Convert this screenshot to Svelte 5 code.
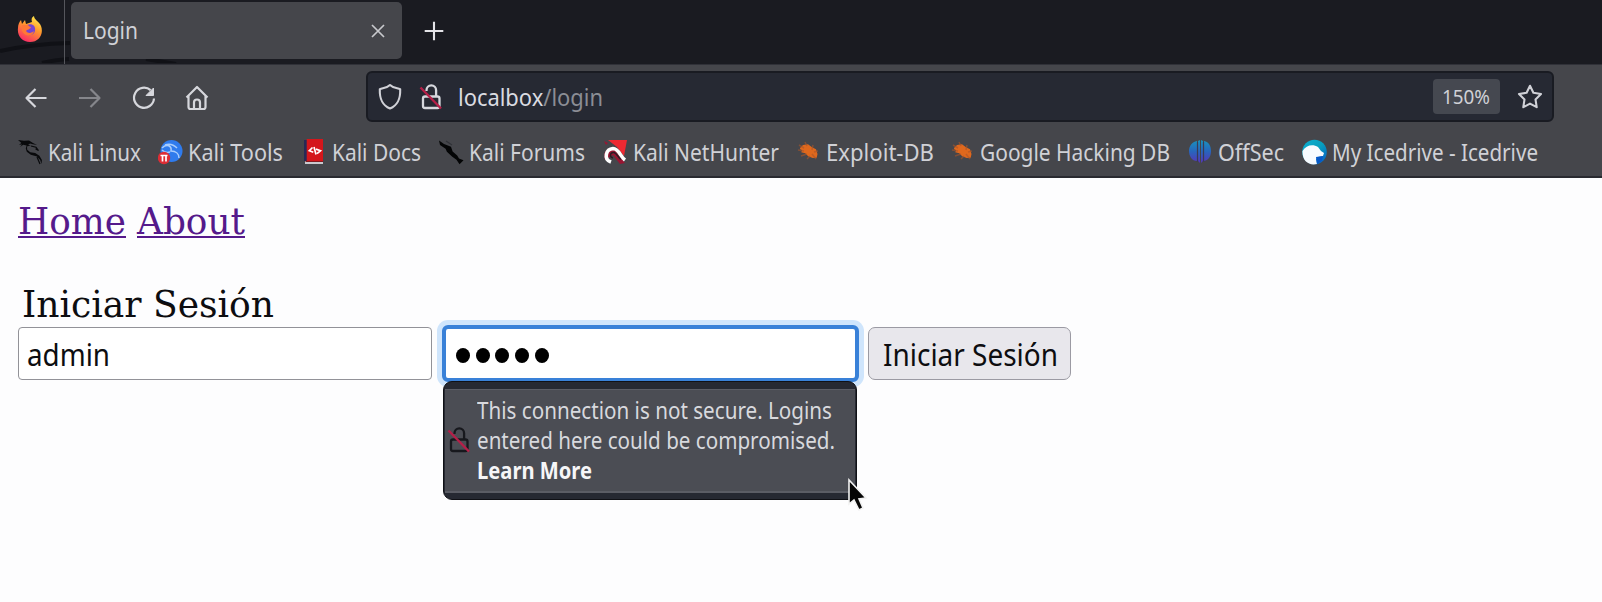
<script>
  const bookmarks = [
    { icon: 'dragon', text: 'Kali Linux', slot: 140, width: 93 },
    { icon: 'tools', text: 'Kali Tools', slot: 144, width: 95 },
    { icon: 'docs', text: 'Kali Docs', slot: 137, width: 89 },
    { icon: 'forums', text: 'Kali Forums', slot: 164, width: 116 },
    { icon: 'nethunter', text: 'Kali NetHunter', slot: 193, width: 146 },
    { icon: 'bug', text: 'Exploit-DB', slot: 154, width: 108 },
    { icon: 'bug', text: 'Google Hacking DB', slot: 238, width: 190 },
    { icon: 'offsec', text: 'OffSec', slot: 114, width: 66 },
    { icon: 'icedrive', text: 'My Icedrive - Icedrive', slot: 240, width: 206 }
  ];

  // Condenses a label horizontally so that it occupies the given width.
  function fit(node, width) {
    const natural = node.getBoundingClientRect().width;
    node.style.transform = `scaleX(${width / natural})`;
    node.style.marginRight = `${width - natural}px`;
  }
</script>

{#snippet lock(color)}
  <svg class="lock" width="24" height="28" viewBox="0 0 24 28" fill="none">
    <rect x="4" y="13.5" width="16.5" height="11.5" rx="2" stroke={color} stroke-width="2.3" />
    <path d="M7.5 8V7.2a4.8 4.8 0 0 1 9.6 0V13" stroke={color} stroke-width="2.3" />
    <path d="M1.5 4.5 22 25.5" stroke="#b51f48" stroke-width="2.4" />
  </svg>
{/snippet}

{#snippet glyph(name)}
  <svg class="glyph" width="25" height="26" viewBox="0 0 25 26" fill="none">
    {#if name === 'dragon'}
      <path d="M0 1l6 .8 5-.3 4 2.5 4 2-4-.8-3-.6-2 1.500 3 .2-4 1.200.2 3.200 3 2.600 5 .8 4.200 2.600 2.500 4.200-.4 4-1.300-4-3.200-3.300-6.200-1.800-4-3-1-3.300.8-3-3.400-.7L2 8l2-2.500-3 .2 2.400-1.600z" fill="#08090b" />
      <path d="M13 7l5 1.200 2.500 3.300-3-1.800M19 18l3 7" stroke="#08090b" stroke-width="1.2" />
    {:else if name === 'tools'}
      <circle cx="13.500" cy="12" r="11" fill="#2f7bed" />
      <path d="M4 9c5-5 10-2 9 3 5 0 8 3 8 7M7 6c5-2 9 0 12 3M12 13c-3 1-6 0-8-2" stroke="#a9cdfc" stroke-width="1.5" />
      <circle cx="6" cy="19" r="6.200" fill="#dd2d35" />
      <path d="M2.500 16.500h7M4.500 16.500v6M8 16.500v6" stroke="#fff" stroke-width="1.700" />
    {:else if name === 'docs'}
      <path d="M2 1h3v21H2z" fill="#272956" />
      <path d="M4.700 0H21v22H4.700z" fill="#d4161b" />
      <path d="M3 22h18v3H3z" fill="#c9c9ce" />
      <path d="M3.500 22H21v1H3.500z" fill="#831a20" />
      <path d="m10.500 8.500-3.200 3.200 4 1.500M15 14.700l3.500-3-4.500-1.600M12 8l2 7.500" stroke="#fff" stroke-width="1.700" />
    {:else if name === 'forums'}
      <path d="M0 1.500 5 5l7 2.800 1.600 4.600 4.600 4 1.800 3 4.500 1.800-4 4-3-4.500-4.200-3-5.400-5-1.300-3L1 6z" fill="#030405" />
      <path d="M7 2l6 4" stroke="#303238" stroke-width="1.2" />
    {:else if name === 'nethunter'}
      <path d="M5 1h19l-3 16-7-9z" fill="#ed2932" />
      <path d="M3 6 1 2l4 2M2 21c-3-8 3-14 9-11l11 14-5 1-7-9" fill="#981532" />
      <path d="M8 23c-8-3-5-13 2-13.500 6 0 7 8 12 11.500" stroke="#fff" stroke-width="3.600" />
      <path d="M10 19c-4-1-3-6 1-5.500 3 1 4 5 7 7" stroke="#2b1c26" stroke-width="1.400" />
    {:else if name === 'bug'}
      <path d="M4 9l3-3 5-.8 4 3 4 2 1.500 4.800-.8 3.700-4 .2-4.500-1.700-3-3-4-1 1-2-2-1z" fill="#df681d" />
      <path d="m3 6 5 3M9 3l2 4M2 11l6 1M5 17l6-2M11 20l3-3M17 6l-1 5M22 12l-4 1M20 20l-4-5" stroke="#a9552a" stroke-width="1.500" opacity=".6" />
    {:else if name === 'offsec'}
      <defs>
        <linearGradient id="offsec" x1="0" y1="0" x2="0" y2="1">
          <stop stop-color="#1893bd" /><stop offset=".5" stop-color="#2865bd" /><stop offset="1" stop-color="#5734b8" />
        </linearGradient>
      </defs>
      <path d="M9 2v20C4 22 1 17 1 12S4 3 9 2zm3-1v23l-2-2V2zm3 1v20l-2 2V1zm1 0c5 1 7 5 7 10s-2 9-7 10z" fill="url(#offsec)" />
      <path d="M9.500 3v20M15.500 3v20" stroke="#393b55" stroke-width="1.200" />
    {:else}
      <defs>
        <linearGradient id="ice" x1="0" y1="0" x2="1" y2="1">
          <stop stop-color="#0caed0" /><stop offset=".5" stop-color="#079fbe" /><stop offset="1" stop-color="#0757c5" />
        </linearGradient>
      </defs>
      <circle cx="12.500" cy="13" r="12.300" fill="url(#ice)" />
      <path d="M.5 12C4 6 11 5 16 8l3 4 3 2-1 3-5 1-2 2 1 5C7 27 0 22 .5 12z" fill="#f7fbff" />
      <path d="m14 18 7-1-1 5-5 3z" fill="#0758c8" />
    {/if}
  </svg>
{/snippet}

<div class="window">
  <header>
    <div class="tabs">
      <svg class="streaks" width="240" height="63" viewBox="0 0 240 63" fill="none">
        <path d="M0 51Q32 44 70 43M42 63Q54 60 69 59M146 59l30 5" stroke="#101116" stroke-width="4" />
      </svg>
      <div class="brand">
        <svg width="26" height="28" viewBox="0 0 26 28">
          <defs>
            <linearGradient id="flame" x1=".8" y1="0" x2=".3" y2="1">
              <stop stop-color="#fff04d" /><stop offset=".45" stop-color="#ff972d" /><stop offset="1" stop-color="#fa2868" />
            </linearGradient>
          </defs>
          <path d="M4 4l1 4 3-4 1 4 6-2c-1-3 0-5 2-6 0 4 5 5 7 10 3 8-2 16-11 16C5 26 0 20 1 12c0-3 1-6 3-8z" fill="url(#flame)" />
          <path d="M10 9c5-2 9 1 8 6-1 4-6 6-10 2-2-2-1-4 1-4l3-1z" fill="#7544d2" />
          <path d="M5 9l5 0c2 0 2 2 4 2-1 3-4 2-5 4 2 3 6 2 8 0-1 6-9 6-12 0z" fill="#ff7836" />
        </svg>
      </div>
      <div class="tab">
        <span class="text" use:fit={55}>Login</span>
        <svg width="14" height="14" viewBox="0 0 14 14"><path d="M1 1l12 12M13 1 1 13" stroke="#c8c9cd" stroke-width="1.700" /></svg>
      </div>
      <svg class="plus" width="20" height="20" viewBox="0 0 20 20"><path d="M10 .7v18.600M.7 10h18.600" stroke="#e4e4e8" stroke-width="2.100" /></svg>
    </div>

    <div class="toolbar">
      <div class="nav">
        <svg width="26" height="26" viewBox="0 0 26 26"><path d="M23.500 13H3M12.500 4 3.500 13l9 9" /></svg>
        <svg class="off" width="26" height="26" viewBox="0 0 26 26"><path d="M2 13h20.500M13.500 4l9 9-9 9" /></svg>
        <svg width="26" height="26" viewBox="0 0 26 26"><path d="M19.600 5.200A10 10 0 1 0 23 13.500" /><path d="M22.500 3v7.500H15z" class="solid" /></svg>
        <svg class="home" width="26" height="26" viewBox="0 0 26 26"><path d="M2.500 12.500 13 2l10.500 10.500M4.500 11v11q0 2 2 2h13q2 0 2-2V11M10 24v-6.500a3 3 0 0 1 6 0V24" /></svg>
      </div>
      <div class="address">
        <svg class="line" width="26" height="28" viewBox="0 0 26 28"><path d="M13 2C10 5 6 5 2.800 6.200 2.500 16 5 22 13 25.500 21 22 23.500 16 23.200 6.200 20 5 16 5 13 2z" /></svg>
        {@render lock('#d6d7dd')}
        <div class="url"><span class="text" use:fit={145}>localbox<i>/login</i></span></div>
        <div class="zoom"><span class="text" use:fit={48}>150%</span></div>
        <svg class="line" width="26" height="26" viewBox="0 0 26 26"><path d="m13 1.800 3.400 7 7.600 1.200-5.500 5.400 1.200 7.800-6.700-3.600-6.700 3.600 1.200-7.800L2 10l7.600-1.200z" /></svg>
      </div>
    </div>

    <nav class="bookmarks">
      {#each bookmarks as b}
        <div class="bookmark" style="width: {b.slot}px">
          {@render glyph(b.icon)}
          <span class="text" use:fit={b.width}>{b.text}</span>
        </div>
      {/each}
    </nav>
  </header>

  <main>
    <div class="links">
      <a href="#home" use:fit={108}>Home</a>
      <a href="#about" use:fit={108}>About</a>
    </div>
    <div class="title"><span use:fit={252}>Iniciar Sesión</span></div>
    <div class="form">
      <div class="field"><span class="text" use:fit={83}>admin</span></div>
      <div class="field active">
        {#each Array(5) as _}<b></b>{/each}
        <div class="notice">
          <div class="message">
            {@render lock('#17181d')}
            <div>
              <span class="text" use:fit={355}>This connection is not secure. Logins</span>
              <span class="text" use:fit={358}>entered here could be compromised.</span>
              <span class="text more" use:fit={115}>Learn More</span>
            </div>
          </div>
        </div>
        <svg class="cursor" width="22" height="36" viewBox="0 0 22 36">
          <path d="M2 2v24l5-4 5 10 4-2-4-9 7-1z" fill="#050505" stroke="#f2f2f2" stroke-width="1.600" />
        </svg>
      </div>
      <div class="submit"><span class="text" use:fit={175}>Iniciar Sesión</span></div>
    </div>
  </main>
</div>

<style>
  :global(body) { margin: 0; background: #fdfdfe; }
  .window { width: 1602px; height: 602px; overflow: hidden; background: #fdfdfe; font-family: "Noto Sans", sans-serif; }
  svg { display: block; flex: none; }
  .text, .title span, .links a { display: inline-block; white-space: nowrap; transform-origin: left center; }
  header { height: 178px; box-sizing: border-box; background: #45464b; border-bottom: 2px solid #292a30; color: #d0d1d6; }

  .tabs { position: relative; height: 65px; display: flex; align-items: flex-start; background: #1a1b21; border-bottom: 1px solid #303138; box-sizing: border-box; }
  .streaks { position: absolute; left: 0; top: 0; }
  .brand { position: relative; box-sizing: border-box; width: 65px; height: 64px; padding: 16px 0 0 17px; border-right: 1px solid #55565c; }
  .tab { position: relative; box-sizing: border-box; width: 331px; height: 57px; margin: 2px 0 0 6px; padding: 0 17px 0 12px; display: flex; align-items: center; justify-content: space-between; border-radius: 5px; background: #45464b; font-size: 23.500px; line-height: 57px; }
  .plus { margin: 21px 0 0 22px; }

  .toolbar { height: 63px; display: flex; box-sizing: border-box; padding: 6px 0 0 23px; }
  .nav { width: 343px; display: flex; gap: 28px; padding-top: 14px; }
  .nav .home { margin-left: -1px; }
  .nav path { fill: none; stroke: #d6d7dc; stroke-width: 2.200; stroke-linejoin: round; }
  .nav .off path { stroke: #85868b; }
  .nav .solid { fill: #d6d7dc; stroke-width: 1; }
  .address { box-sizing: border-box; width: 1188px; height: 51px; padding: 0 9px; display: flex; align-items: center; border: 2px solid #191b22; border-radius: 6px; background: #262933; }
  .line path { fill: none; stroke: #d0d1d7; stroke-width: 2.100; stroke-linejoin: round; }
  .address .lock { margin-left: 16px; }
  .url { flex: 1; padding-left: 15px; font-size: 23.500px; line-height: 48px; color: #dadbe1; }
  .url i { font-style: normal; color: #8b8d95; }
  .zoom { box-sizing: border-box; width: 67px; height: 35px; margin-right: 17px; padding-left: 9px; border-radius: 4px; background: #454850; font-size: 20px; line-height: 36px; }

  .bookmarks { display: flex; height: 48px; padding: 0 0 0 18px; }
  .bookmark { flex: none; height: 48px; display: flex; align-items: center; gap: 5px; font-size: 23.500px; line-height: 48px; }

  main { padding: 22px 18px; color: #0d0d10; }
  .links, .title { font-family: "DejaVu Serif", serif; font-size: 37.500px; line-height: 42px; height: 42px; }
  .links { display: flex; gap: 11px; }
  .links a { color: #551a8b; text-decoration-thickness: 1.500px; text-underline-offset: 2px; }
  .title { margin-top: 41px; padding-left: 4px; }
  .form { display: flex; margin-top: 2px; }
  .field { box-sizing: border-box; width: 414px; height: 53px; padding-left: 8px; border: 1.500px solid #929298; border-radius: 4px; background: #fff; font-size: 30px; line-height: 54px; }
  .active { position: relative; display: flex; align-items: center; gap: 5.700px; width: 417px; height: 57px; margin: -2px 0 -2px 10px; padding: 3px 0 0 10px; border: 4px solid #3981d8; border-radius: 6px; box-shadow: 0 0 0 5px #cfe5fc; }
  .active b { width: 14px; height: 15px; border-radius: 50%; background: #000; }
  .submit { box-sizing: border-box; width: 203px; height: 53px; margin-left: 9px; padding-left: 14px; border: 1.500px solid #9b9aa3; border-radius: 7px; background: #e8e7ec; font-size: 30px; line-height: 53px; }
  .notice { position: absolute; left: -3px; top: 52px; box-sizing: border-box; width: 414px; height: 119px; padding: 7px 1px; border: 1px solid #101116; border-radius: 9px; background: #262932; }
  .message { box-sizing: border-box; height: 104px; display: flex; align-items: center; gap: 6px; padding: 0 0 2px 2px; border: 1px solid #5b5d65; border-width: 1px 0 2px; background: #4b4d54; color: #d8d9de; font-size: 23.500px; line-height: 30px; }
  .message > div { display: grid; justify-items: start; }
  .message .more { color: #f6f6f8; font-weight: 700; }
  .cursor { position: absolute; left: 401px; top: 149px; }
</style>
